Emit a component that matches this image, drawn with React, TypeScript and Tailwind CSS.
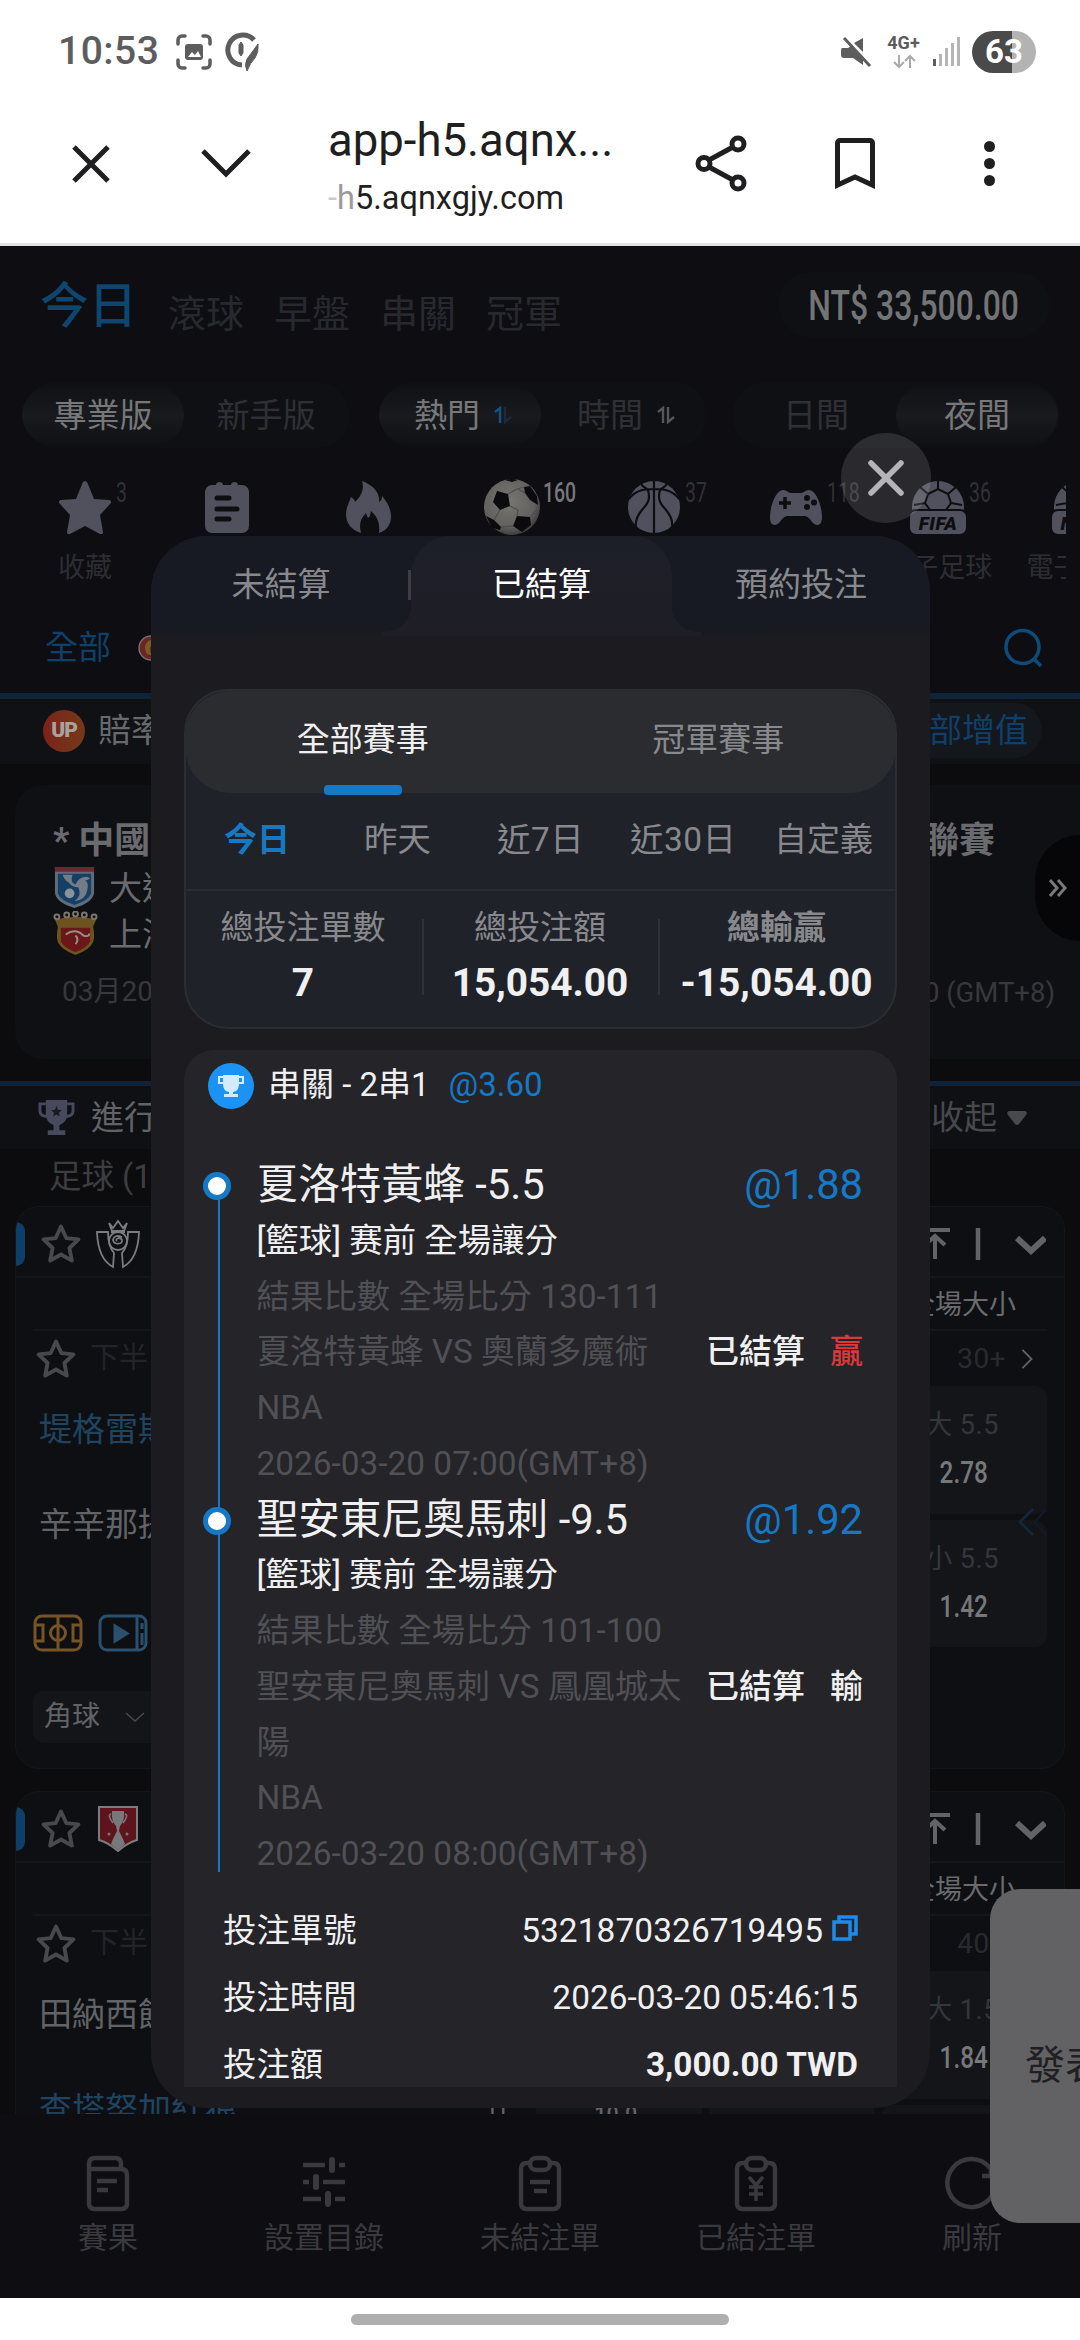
import React from "react";

type P = { className?: string };

const Star = ({ className = "" }: P) => (
  <svg viewBox="0 0 24 24" className={className} fill="none" stroke="currentColor" strokeWidth="2.200" strokeLinejoin="round">
    <path d="M12 2l3 6.600 7 .8-5.200 4.900 1.400 7.200L12 18l-6.200 3.500 1.400-7.200L2 9.400l7-.8z" />
  </svg>
);

const SolidStar = () => (
  <svg viewBox="0 0 54 54" className="size-[54px]" fill="#50515c">
    <path d="M27 1c1 0 2 1 2.500 2L36 19l15 1c2 .5 3 2 1 4L42 35l3 17c0 2-1 2.500-3 2l-15-8-15 8c-2 .5-3 0-3-2l3-17L2 24c-2-2-1-3.500 1-4l15-1 6.500-16c.5-1 1.500-2 2.500-2z" />
  </svg>
);

const ListIcon = () => (
  <svg viewBox="0 0 54 54" className="size-[54px]" fill="#50515c">
    <path d="M12 5h4c0-4 7-4 7 0h8c0-4 7-4 7 0h4a7 7 0 0 1 7 7v34a7 7 0 0 1-7 7H12a7 7 0 0 1-7-7V12a7 7 0 0 1 7-7z" />
    <path d="M17 18h12M17 29h20M17 39h12" stroke="#0d0d12" strokeWidth="5" strokeLinecap="round" />
  </svg>
);

const Fire = () => (
  <svg viewBox="0 0 54 54" className="size-[54px]" fill="#50515c">
    <path d="M20 1c13 5 18 13 17 21 2-1 3-3 3-6 6 7 9 13 9 21 0 8-5 14-12 16 1-9-1-16-8-22-1 4-1 6-3 7-1-2-2-4-2-5-6 6-7 12-5 20C10 50 4 44 4 34c0-6 3-11 5-17 2 1 4 3 4 5 5-5 10-12 7-21z" />
  </svg>
);

const Soccer = () => (
  <svg viewBox="0 0 58 58" className="size-[58px]">
    <defs>
      <radialGradient id="ball" cx=".45" cy=".4" r=".65">
        <stop offset="0" stopColor="#777672" />
        <stop offset=".7" stopColor="#62615f" />
        <stop offset="1" stopColor="#333" />
      </radialGradient>
    </defs>
    <circle cx="29" cy="29" r="28" fill="url(#ball)" />
    <g fill="#0b0b0e">
      <path d="M14 13l11 3 2 12-10 4-7-8z" />
      <path d="M41 9l6-1 7 10 1 9-8-5-5-7z" />
      <path d="M34 38l13 1 1 8-9 7-9-6z" />
      <path d="M3 38l8 4 7 7-1 3-8-2z" />
      <path d="M22 2q7-2 13 0l-6 2z" />
    </g>
    <path d="M25 16l9-5 7-2M27 28l8 4-1 6M42 15l-7-4M17 32l-6 10M30 48l-12 1M47 39l7-7" stroke="#4f4e4c" strokeWidth="1.300" fill="none" />
  </svg>
);

const Basketball = () => (
  <svg viewBox="0 0 54 54" className="size-[54px]">
    <circle cx="27" cy="27" r="26" fill="#50515c" />
    <path d="M27 1v52M14 4c2 3 5 4 7 6 3 10-1 14-6 20-6 7-7 12-6 18M40 4c-2 3-5 4-7 6-3 10 1 14 6 20 6 7 7 12 6 18M2 19C9 9 20 9 27 9s18 0 25 10" stroke="#0d0d12" strokeWidth="2.200" fill="none" />
  </svg>
);

const Gamepad = () => (
  <svg viewBox="0 0 54 54" className="size-[54px]" fill="#50515c">
    <path d="M14 10c4 0 5 3 8 3h10c3 0 4-3 8-3 7 0 13 16 13 27 0 6-2 8-5 8-5 0-7-9-12-9H18c-5 0-7 9-12 9-3 0-5-2-5-8C1 26 7 10 14 10z" />
    <path d="M16 17v12M10 23h12" stroke="#0d0d12" strokeWidth="3.500" />
    <g fill="#0d0d12"><circle cx="38" cy="18" r="3" /><circle cx="38" cy="27" r="3" /><circle cx="45" cy="22.500" r="3" /></g>
  </svg>
);

const Esport = ({ label }: { label: string }) => (
  <svg viewBox="0 0 58 58" className="size-[58px]">
    <circle cx="29" cy="29" r="26" fill="#50515c" />
    <path d="M19 16l10-5 10 5 3 9-5 7H21l-5-7zM29 3v8M39 16l8-7M19 16l-8-7M16 25l-11 2M42 25l11 2" stroke="#0d0d12" strokeWidth="2" fill="none" />
    <rect x="0" y="32" width="58" height="25" rx="7" fill="#50515c" stroke="#0d0d12" strokeWidth="2" />
    <text x="29" y="51.500" textAnchor="middle" fontFamily="Roboto" fontWeight="900" fontStyle="italic" fontSize="19" letterSpacing="0.500" fill="#0d0d12">{label}</text>
  </svg>
);

const Sorter = ({ a, b }: { a: string; b: string }) => (
  <svg viewBox="0 0 18 18" className="size-[18px]" fill="none" strokeWidth="2.400">
    <path d="M1 6l5-4v15" stroke={a} />
    <path d="M11 1v15l6-5" stroke={b} />
  </svg>
);

function StatusBar() {
  return (
    <div className="flex h-[103px] items-center justify-between pl-[58px] pr-[44px] text-[#5d5d5d]">
      <div className="flex items-center">
        <span className="w-[118px] text-[39px] font-medium leading-none tracking-[0.500px]">10:53</span>
        <svg viewBox="0 0 36 36" className="size-[36px]" fill="none" stroke="currentColor" strokeWidth="3.500" strokeLinecap="round">
          <path d="M2 10V6a4 4 0 0 1 4-4h3M27 2h3a4 4 0 0 1 4 4v4M34 26v4a4 4 0 0 1-4 4h-3M9 34H6a4 4 0 0 1-4-4v-4" />
          <rect x="9" y="10" width="18" height="16" rx="3" fill="currentColor" stroke="none" />
          <path d="M12 23l4-5 3 3 3-4 3 6z" fill="#fff" stroke="none" />
        </svg>
        <svg viewBox="0 0 36 40" className="ml-[12px] h-[40px] w-[36px]" fill="none" stroke="currentColor">
          <path d="M30 8A15 15 0 1 0 18 33" strokeWidth="5" />
          <path d="M34 12q1 8-3 14-5 5-8 13-3-6 0-12z" fill="currentColor" strokeWidth="1" />
          <path d="M17 10l2 3v8l-2 3-2-3v-8z" fill="currentColor" strokeWidth="1" />
        </svg>
      </div>
      <div className="flex items-center">
        <svg viewBox="0 0 32 30" className="h-[30px] w-[32px]">
          <path d="M2 11h6l3-2 12 14v5l-10-7H4q-3 0-3-3v-4q0-3 1-3zM14 6l9-5v14z" fill="currentColor" />
          <path d="M4 1l26 28" stroke="currentColor" strokeWidth="3" />
        </svg>
        <div className="ml-[15px] flex w-[34px] flex-col items-center">
          <span className="text-[18px] font-bold leading-[18px]">4G+</span>
          <svg viewBox="0 0 24 15" className="mt-[2px] h-[15px] w-[24px]" fill="none" stroke="#aaa" strokeWidth="2">
            <path d="M7 1v12M2 8l5 5 5-5M18 14V2M13 7l5-5 5 5" />
          </svg>
        </div>
        <div className="ml-[12px] flex h-[29px] items-end gap-[2.500px]">
          <i className="h-[7px] w-[3.500px] bg-[#5d5d5d]" />
          <i className="h-[12px] w-[3.500px] bg-[#b5b5b5]" />
          <i className="h-[18px] w-[3.500px] bg-[#b5b5b5]" />
          <i className="h-[23px] w-[3.500px] bg-[#b5b5b5]" />
          <i className="h-[29px] w-[3.500px] bg-[#b5b5b5]" />
        </div>
        <div className="ml-[12px] flex h-[42px] w-[64px] items-center justify-center rounded-full bg-linear-to-r from-[#4a4a4a] from-62% to-[#b3b3b3] to-62% text-[33px] font-bold leading-none text-white">63</div>
      </div>
    </div>
  );
}

function BrowserBar() {
  return (
    <div className="flex h-[143px] items-start border-b-[3px] border-[#dfe3e5] text-[#1f1f22]">
      <svg viewBox="0 0 38 38" className="ml-[72px] mt-[42px] size-[38px]" stroke="currentColor" strokeWidth="5"><path d="M2 2l34 34M36 2L2 36" /></svg>
      <svg viewBox="0 0 50 29" className="ml-[91px] mt-[46px] h-[29px] w-[50px]" fill="none" stroke="currentColor" strokeWidth="5"><path d="M2 2l23 23L48 2" /></svg>
      <div className="ml-[77px] mt-[11px] w-[300px]">
        <div className="whitespace-nowrap text-[45.500px] leading-[54px]">app-h5.aqnx...</div>
        <div className="mt-[11px] whitespace-nowrap text-[32.500px] leading-[38px]"><span className="text-[#c9c9c9]">-</span><span className="text-[#9a9a9a]">h</span>5.aqnxgjy.com</div>
      </div>
      <svg viewBox="0 0 52 57" className="ml-[67px] mt-[32px] h-[57px] w-[52px]" fill="none" stroke="currentColor" strokeWidth="5">
        <circle cx="43" cy="9" r="6" /><circle cx="9" cy="28.500" r="6" /><circle cx="43" cy="48" r="6" /><path d="M14 25l24-13M14 32l24 13" />
      </svg>
      <svg viewBox="0 0 40 51" className="ml-[88px] mt-[35px] h-[51px] w-[40px]" fill="none" stroke="currentColor" strokeWidth="5"><path d="M2.500 47V5a2.500 2.500 0 0 1 2.500-2.500h30A2.500 2.500 0 0 1 37.500 5v42L20 39z" /></svg>
      <div className="ml-[109px] mt-[38px] flex flex-col gap-[6px]">
        <i className="size-[11px] rounded-full bg-current" /><i className="size-[11px] rounded-full bg-current" /><i className="size-[11px] rounded-full bg-current" />
      </div>
    </div>
  );
}

function Toggle({ children, className = "" }: { children: React.ReactNode; className?: string }) {
  return <div className={"flex h-[66px] w-[328px] items-center rounded-full bg-[#0f1014] " + className}>{children}</div>;
}

const pillOn = "flex h-[58px] w-[162px] items-center justify-center gap-[14px] rounded-full bg-linear-to-b from-[#101115] via-[#191a1d] to-[#101115] text-[#77787a]";
const pillOff = "flex h-[58px] w-[164px] items-center justify-center gap-[14px] text-[#2f3035]";

function Sport({ icon, count, label, active }: { icon: React.ReactNode; count?: string; label?: string; active?: boolean }) {
  return (
    <div className="relative flex w-[142.200px] shrink-0 flex-col items-center">
      <div className="flex h-[58px] items-center">{icon}</div>
      {count && (
        <span className={"absolute left-[102px] top-[0px] origin-left scale-x-[.72] text-[27px] leading-[30px] " + (active ? "font-medium text-[#77787a]" : "text-[#303136]")}>{count}</span>
      )}
      <span className="mt-[16px] whitespace-nowrap text-[27px] leading-[32px] text-[#2d2e33]">{label}</span>
    </div>
  );
}

function Odds({ top, value, className }: { top: string; value: string; className: string }) {
  return (
    <div className={"flex w-[166px] flex-col items-center rounded-[12px] bg-[#141519] pt-[22px] " + className}>
      <span className="mr-[4px] text-[27px] leading-[34px] tracking-[0.500px] text-[#35363b]">{top}</span>
      <span className="mt-[13px] scale-x-[.76] text-[32px] font-medium leading-[34px] text-[#77787a]">{value}</span>
    </div>
  );
}

function LeagueHead({ crest }: { crest: React.ReactNode }) {
  return (
    <>
      <div className="flex h-[71px] items-center border-b-2 border-[#15161a] pt-[4px]">
        <i className="h-[44px] w-[9px] rounded-r-full bg-[#0d3f68]" />
        <Star className="ml-[15px] size-[42px] text-[#48494d]" />
        <div className="ml-[14px] flex w-[44px] justify-center">{crest}</div>
        <svg viewBox="0 0 130 34" className="ml-auto mr-[18px] h-[34px] w-[130px] text-[#626367]" fill="none" stroke="currentColor">
          <path d="M4 3h30M19 32V9M9 18l10-9 10 9" strokeWidth="4" />
          <path d="M62 1v32" strokeWidth="4.500" />
          <path d="M101 11l14 13 14-13" strokeWidth="6" />
        </svg>
      </div>
      <div className="mx-[17px] flex h-[53px] items-center justify-end border-b-2 border-[#15161a] pr-[31px] pt-[3px] text-[27px] text-[#6a6b6e]">全場大小</div>
    </>
  );
}

function MatchHead({ count }: { count: string }) {
  return (
    <div className="flex h-[55px] items-center pl-[19px]">
      <Star className="size-[42px] text-[#48494d]" />
      <span className="ml-[13px] text-[29px] text-[#232428]">下半</span>
      <span className="ml-auto text-[28px] tracking-[0.500px] text-[#292a2f]">{count}</span>
      <svg viewBox="0 0 12 22" className="ml-[15px] mr-[31px] h-[20px] w-[12px]" fill="none" stroke="#626367" strokeWidth="2"><path d="M1 1l10 10L1 21" /></svg>
    </div>
  );
}

function Page() {
  return (
    <div className="flex h-[1868px] flex-col overflow-hidden bg-[#0d0d12] pt-[26px]">
      <div className="flex h-[66px] shrink-0 items-center">
        <span className="ml-[40px] mt-[4px] w-[98px] text-[48.500px] font-medium leading-none text-[#0e4672]">今日</span>
        <div className="ml-[30px] mt-[18px] flex gap-[30px] text-[38px] leading-none text-[#28292e]">
          <span>滾球</span><span>早盤</span><span>串關</span><span>冠軍</span>
        </div>
        <div className="ml-auto mr-[30px] flex h-[66px] w-[272px] items-center justify-center rounded-full bg-[#0f1014]">
          <span className="scale-x-[.76] whitespace-nowrap text-[42px] font-medium text-[#737476]">NT$ 33,500.00</span>
        </div>
      </div>
      <div className="mt-[44px] flex shrink-0 items-center pl-[22px] text-[33px] leading-none">
        <Toggle><span className={pillOn}>專業版</span><span className={pillOff}>新手版</span></Toggle>
        <Toggle className="ml-[29px]"><span className={pillOn + " pl-[6px]"}>熱門<Sorter a="#0f5488" b="#1c2b38" /></span><span className={pillOff + " pl-[6px]"}>時間<Sorter a="#55565a" b="#55565a" /></span></Toggle>
        <Toggle className="ml-[25px]"><span className={pillOff + " pl-[4px]"}>日間</span><span className={pillOn}>夜間</span></Toggle>
      </div>
      <div className="mr-[14px] mt-[30px] flex h-[114px] shrink-0 overflow-hidden pl-[14px]">
        <Sport icon={<SolidStar />} count="3" label="收藏" />
        <Sport icon={<ListIcon />} />
        <Sport icon={<Fire />} />
        <Sport icon={<Soccer />} count="160" active />
        <Sport icon={<Basketball />} count="37" />
        <Sport icon={<Gamepad />} count="118" />
        <Sport icon={<Esport label="FIFA" />} count="36" label="電子足球" />
        <Sport icon={<Esport label="NBA" />} label="電子籃球" />
      </div>
      <div className="flex h-[101px] shrink-0 items-center pl-[45px] pr-[36px] pt-[10px]">
        <span className="text-[33px] text-[#0f4168]">全部</span>
        <svg viewBox="0 0 26 26" className="ml-[27px] size-[26px]"><circle cx="13" cy="13" r="12" fill="#6b2524" stroke="#74706a" strokeWidth="1.500" /><path d="M15 4C7 6 5 12 9 19l6 2c-5-5-4-10 2-15z" fill="#7a5c22" /></svg>
        <svg viewBox="0 0 40 40" className="ml-auto size-[40px]" fill="none" stroke="#0f4b7a" strokeWidth="3.500"><circle cx="18.500" cy="19" r="16.500" /><path d="M30 31l7 7" /></svg>
      </div>
      <div className="h-[6px] shrink-0 bg-[#0f2438]" />
      <div className="flex h-[65px] shrink-0 items-center bg-[#0f1115] pb-[2px] pl-[43px] pr-[38px]">
        <div className="flex size-[42px] items-center justify-center rounded-full bg-linear-to-r from-[#7c2118] to-[#73391a] text-[21px] font-black tracking-[-1px] text-[#a9a3a0]">UP</div>
        <span className="ml-[13px] text-[33px] text-[#68696c]">賠率增值</span>
        <span className="ml-auto rounded-full bg-[#14171c] px-[14px] text-[33px] leading-[55px] text-[#10406a]">全部增值</span>
      </div>
      <div className="flex h-[317px] shrink-0 flex-col bg-[#0c0c0e] pl-[15px] pt-[21px]">
        <div className="flex h-[274px] rounded-l-[28px] bg-[#0f1014] pl-[38px] text-[#6a6b6e]">
          <div className="flex w-[400px] flex-col pt-[31px]">
            <div className="text-[36px] font-bold leading-[50px]">* 中國</div>
            <div className="flex h-[45px] items-center">
              <svg viewBox="0 0 44 44" className="-mt-[3px] size-[43px]"><path d="M2 1h40v27q-2 10-20 15Q4 38 2 28z" fill="#606c78" /><path d="M5 8h34v20q-2 7-17 12Q7 35 5 28z" fill="#153f66" /><path d="M2 1h40v5H2z" fill="#6b2a31" /><path d="M10 9h10q-3 8 3 10 3-8 12-8l3 2-5 2q4 2 2 10-2 10-13 11 8-6 4-14-6 0-10-5-5-3-6-8z" fill="#727d88" /><circle cx="17" cy="28" r="5" fill="#8a929a" /></svg>
              <span className="ml-[13px] text-[33px]">大連</span>
            </div>
            <div className="mt-[1px] flex h-[45px] items-center">
              <svg viewBox="0 0 46 46" className="-mt-[3px] size-[45px]"><path d="M2 9q21-6 42 0l-3 7q2 10 0 16-4 8-18 13Q9 40 5 32q-2-6 0-16z" fill="#6d5320" /><path d="M8 17h30v14q-3 7-15 11Q11 38 8 31z" fill="#6b1718" /><path d="M13 24q10-7 18 1 6 2 6-2M23 25q4 4 0 9" stroke="#968d88" strokeWidth="2" fill="none" /><g fill="none" stroke="#7d766c" strokeWidth="2"><circle cx="4" cy="6" r="2.500" /><circle cx="14" cy="4" r="2.500" /><circle cx="23" cy="3" r="2.500" /><circle cx="32" cy="4" r="2.500" /><circle cx="42" cy="6" r="2.500" /></g></svg>
              <span className="ml-[11px] text-[33px]">上海</span>
            </div>
            <div className="ml-[9px] mt-[17px] text-[28px] leading-[36px] text-[#37383c]">03月20日</div>
          </div>
          <div className="relative ml-auto flex w-[250px] flex-col pt-[31px]">
            <div className="pr-[85px] text-right text-[36px] font-bold leading-[50px]">聯賽</div>
            <div className="mt-[109px] whitespace-nowrap pr-[25px] text-right text-[27.500px] leading-[36px] text-[#37383c]">00 (GMT+8)</div>
            <div className="absolute right-0 top-[50px] flex h-[106px] w-[45px] items-center justify-center rounded-l-full bg-[#060608]">
              <svg viewBox="0 0 18 18" className="size-[18px]" fill="none" stroke="#77787a" strokeWidth="3"><path d="M1 1l7 8-7 8M9 1l7 8-7 8" /></svg>
            </div>
          </div>
        </div>
      </div>
      <div className="h-[5px] shrink-0 bg-[#0f2438]" />
      <div className="flex h-[63px] shrink-0 items-center bg-[#0f1014] pl-[38px] pr-[53px] text-[33px] text-[#626367]">
        <svg viewBox="0 0 38 38" className="size-[37px]" fill="#474a5c"><path d="M8 1h22v14q0 9-8 12v5h6v5H10v-5h6v-5q-8-3-8-12z" /><path d="M8 5H2v7q0 5 7 6M30 5h6v7q0 5-7 6" stroke="#474a5c" strokeWidth="3" fill="none" /><path d="M19 7l1.500 4 4 .5-3 2.500 1 4-3.500-2-3.500 2 1-4-3-2.500 4-.5z" fill="#191a24" /></svg>
        <span className="ml-[16px]">進行中</span>
        <span className="ml-auto text-[#48494d]">收起</span>
        <svg viewBox="0 0 20 14" className="ml-[10px] h-[14px] w-[20px]" fill="#48494d"><path d="M2 0h16q3 1 1 4l-7 9q-2 2-4 0L1 4Q-1 1 2 0z" /></svg>
      </div>
      <div className="flex h-[57px] shrink-0 items-center bg-[#0c0c0e] pl-[49px] text-[32.500px] text-[#3c3d41]">足球 (16)</div>
      <div className="flex grow flex-col gap-[22px] bg-[#0c0c0e] px-[15px]">
        <div className="h-[563px] shrink-0 overflow-hidden rounded-[24px] border border-[#15161a] bg-[#0e0f13]">
          <LeagueHead crest={<svg viewBox="0 0 44 50" className="h-[50px] w-[44px]" fill="none" stroke="#7b7c7f" strokeWidth="1.800"><path d="M1 13h11q0 14 6 21l-1 14Q2 40 1 13zM43 13H32q0 14-6 21l1 14Q42 40 43 13zM13 4l4 5 5-7 5 7 4-5-3 8H16zM15 13h14" /><circle cx="22" cy="22" r="9" /><path d="M26 18q-8-3-9 3 1 5 8 3 3-4-2-5-4 1-2 3" /></svg>} />
          <MatchHead count="30+" />
          <div className="flex justify-between pr-[17px]">
            <div className="flex w-[400px] flex-col pl-[23px]">
              <span className="mt-[19px] text-[33px] leading-[50px] text-[#1f4460]">堤格雷斯</span>
              <span className="mt-[45px] text-[33px] leading-[50px] text-[#626367]">辛辛那提</span>
              <div className="ml-[-6px] mt-[64px] flex gap-[15px]">
                <svg viewBox="0 0 50 38" className="h-[38px] w-[50px]" fill="none" stroke="#765424" strokeWidth="3"><rect x="2" y="2" width="46" height="34" rx="7" /><path d="M25 2v34M2 11h8v16H2M48 11h-8v16h8" /><circle cx="25" cy="19" r="7.500" /></svg>
                <svg viewBox="0 0 50 38" className="h-[38px] w-[50px]" fill="none" stroke="#2a506f" strokeWidth="3"><rect x="2" y="2" width="46" height="34" rx="7" /><path d="M39 2v34M44 9v6M44 19v12" /><path d="M17 12v15l12-7.500z" fill="#2a506f" /></svg>
              </div>
              <div className="ml-[-6px] mt-[39px] flex h-[52px] w-[150px] items-center rounded-[10px] bg-[#141519] pl-[11px] text-[28px] text-[#626367]">角球<svg viewBox="0 0 20 10" className="ml-[25px] h-[10px] w-[20px]" fill="none" stroke="#48494d" strokeWidth="1.500"><path d="M1 1l9 8 9-8" /></svg></div>
            </div>
            <div className="relative flex flex-col gap-[6px]">
              <Odds top="大 5.5" value="2.78" className="h-[128px]" />
              <Odds top="小 5.5" value="1.42" className="h-[127px]" />
              <svg viewBox="0 0 30 28" className="absolute right-0 top-[122px] h-[28px] w-[30px]" fill="none" strokeWidth="2.500"><path d="M16 1L3 14l13 13" stroke="#16283e" /><path d="M29 1L18 14l11 13" stroke="#111a25" /></svg>
            </div>
          </div>
        </div>
        <div className="h-[563px] shrink-0 overflow-hidden rounded-[24px] border border-[#15161a] bg-[#0e0f13]">
          <LeagueHead crest={<svg viewBox="0 0 40 46" className="h-[46px] w-[40px]"><path d="M1 1h38v33q-10 3-19 11Q11 37 1 34z" fill="#5e141d" stroke="#7b7c7f" strokeWidth="2" /><path d="M14 5h12q1 10-4 15l-1 5 4 8 2 5-7 6-7-6 2-5 4-8-1-5q-5-5-4-15z" fill="#77787a" /><path d="M13 8q-4 1 2 9M27 8q4 1-2 9" stroke="#77787a" strokeWidth="1.500" fill="none" /><circle cx="11" cy="28" r="1.500" fill="#77787a" /><circle cx="29" cy="28" r="1.500" fill="#77787a" /></svg>} />
          <MatchHead count="40+" />
          <div className="flex justify-between pr-[17px]">
            <div className="flex w-[400px] flex-col pl-[23px]">
              <span className="mt-[19px] text-[33px] leading-[50px] text-[#626367]">田納西館</span>
              <span className="mt-[45px] text-[33px] leading-[50px] text-[#1f4460]">查塔努加紅狼</span>
            </div>
            <div className="flex">
              <span className="mr-[28px] mt-[128px] scale-x-[.8] text-[30px] leading-[34px] text-[#626367]">H</span>
              <div className="mt-[134px] flex h-[60px] w-[166px] justify-center bg-[#141519] text-[30px] leading-[22px] text-[#626367]"><span className="mr-[6px] scale-x-[.72] font-medium">10.0</span></div>
              <div className="ml-[7px] mt-[134px] h-[60px] w-[165px] bg-[#141519]" />
              <div className="ml-[7px] flex flex-col gap-[6px]">
                <Odds top="大 1.5" value="1.84" className="h-[128px]" />
                <Odds top="小 1.5" value="1.84" className="h-[127px]" />
              </div>
            </div>
          </div>
        </div>
      </div>
    </div>
  );
}

const navPaths = [
  <><path d="M4 14V9q0-6 6-6h20q6 0 6 6v5M4 14h32q6 0 6 6v28q0 6-6 6H10q-6 0-6-6z" /><path d="M12 26h20M12 35h11" /></>,
  <><path d="M2 10h22M38 10h6M2 27h6M22 27h22M2 44h18M34 44h10" /><path d="M31 5v10M15 22v10M27 39v10" strokeWidth="6" strokeLinecap="round" /></>,
  <><path d="M12 8h-2q-6 0-6 6v34q0 6 6 6h26q6 0 6-6V14q0-6-6-6h-2" /><rect x="13" y="3" width="20" height="12" rx="6" /><path d="M13 27h20M17 36h13" /></>,
  <><path d="M12 8h-2q-6 0-6 6v34q0 6 6 6h26q6 0 6-6V14q0-6-6-6h-2" /><rect x="13" y="3" width="20" height="12" rx="6" /><path d="M16 22l7 8 7-8M23 30v16M16 32h14M16 39h14" strokeWidth="3.500" /></>,
  <><path d="M45 36A24 24 0 1 1 41 13M42 12v9h-9" /></>,
];

function BottomNav() {
  return (
    <div className="grid h-[184px] grid-cols-5 bg-[#0d0d12] pt-[41px] text-[#3a3a3e]">
      {["賽果", "設置目錄", "未結注單", "已結注單", "刷新"].map((t, i) => (
        <div key={t} className="flex flex-col items-center">
          <svg viewBox="0 0 46 56" className="h-[56px] w-[46px] overflow-visible" fill="none" stroke="currentColor" strokeWidth="4.500">{navPaths[i]}</svg>
          <span className="mt-[7px] text-[30px] leading-[40px]">{t}</span>
        </div>
      ))}
    </div>
  );
}

type LegT = { name: string; odds: string; score: string; teams: string[]; result: React.ReactNode; date: string };

function Leg({ name, odds, score, teams, result, date }: LegT) {
  return (
    <div className="relative pl-[72.500px] pr-[34px] text-[33.400px] leading-[55.750px] text-[#505055]">
      <i className="absolute left-[19px] top-[15px] size-[28px] rounded-full border-[5px] border-[#1679c6] bg-white" />
      <div className="flex justify-between text-[41.700px] text-[#f0f0f1]"><span>{name}</span><span className="text-[#1679c6]">{odds}</span></div>
      <div className="text-[#f0f0f1]">[籃球] 赛前 全場讓分</div>
      <div>結果比數 全場比分 {score}</div>
      <div className="flex justify-between">
        <div className="whitespace-nowrap">{teams.map((t) => <div key={t}>{t}</div>)}</div>
        <div className="flex gap-[25px] text-[33px] font-medium text-[#f0f0f1]"><span>已結算</span>{result}</div>
      </div>
      <div>NBA</div>
      <div>{date}</div>
    </div>
  );
}

function Modal() {
  return (
    <div className="absolute left-[151px] top-[536px] flex h-[1572px] w-[779px] flex-col overflow-hidden rounded-[56px] bg-[#1c1b20] px-[33px]">
      <div className="mx-[-33px] flex h-[100px] shrink-0 bg-linear-to-b from-[#171a22] from-85% to-[#1a1a21] text-[33px] leading-[98px] text-[#88898c]">
        <div className="w-[260px] text-center"><span className="inline-block w-[258px]">未結算</span></div>
        <div className="relative w-[261px] rounded-t-[40px] bg-linear-to-b from-[#1d1f28] to-[#1f1e27] text-center text-white">
          <i className="absolute left-[-3px] top-[34px] h-[30px] w-[3px] bg-[#3d3e43]" />
          <svg viewBox="0 0 30 30" className="absolute -left-[29px] bottom-0 size-[30px]" fill="#1f1e27"><path d="M30 0v30H0v-4Q26 26 30 0z" /></svg>
          <svg viewBox="0 0 30 30" className="absolute -right-[29px] bottom-0 size-[30px]" fill="#1f1e27"><path d="M0 0v30h30v-4Q4 26 0 0z" /></svg>
          已結算
        </div>
        <div className="w-[258px] text-center">預約投注</div>
      </div>
      <div className="mt-[53px] flex h-[340px] shrink-0 flex-col rounded-[44px] border-2 border-[#2c2d31] bg-[#20222a] text-[33px]">
        <div className="relative -mx-[1px] flex h-[102px] shrink-0 rounded-[46px] bg-[#2b2c30] leading-[98px] text-[#88898c]">
          <span className="w-1/2 text-center text-[#f0f0f1]">全部賽事</span><span className="w-1/2 text-center">冠軍賽事</span>
          <i className="absolute left-[139px] top-[94px] h-[10px] w-[78px] rounded-[4px] bg-[#1679c6]" />
        </div>
        <div className="flex h-[98px] shrink-0 items-center border-b-2 border-[#2b2c31] pb-[2px] pl-[38px] text-[33.400px] text-[#88898c]">
          <span className="w-[140px] text-[33px] font-bold text-[#1679c6]">今日</span><span className="w-[133px]">昨天</span><span className="w-[133px] tracking-[0.500px]">近7日</span><span className="w-[144px] tracking-[0.500px]">近30日</span><span className="text-[33px]">自定義</span>
        </div>
        <div className="grid grow grid-cols-[238px_236px_1fr] items-center divide-x-2 divide-[#303136] pb-[38px] pt-[28px] text-center">
          {[["總投注單數", "7"], ["總投注額", "15,054.00"], ["總輸贏", "-15,054.00"]].map(([a, b], i) => (
            <div key={a} className="flex h-[76px] flex-col items-center justify-center pr-[2px]">
              <span className={"leading-[48px] text-[#88898c] " + (i === 2 ? "font-bold" : "")}>{a}</span>
              <span className="mt-[4px] text-[38.800px] font-bold leading-[54px] text-[#f0f0f1]">{b}</span>
            </div>
          ))}
        </div>
      </div>
      <div className="mt-[21px] flex h-[1037px] shrink-0 flex-col overflow-hidden rounded-t-[30px] bg-[#242429]">
        <div className="flex h-[72px] shrink-0 items-center pl-[24px] text-[33px] text-[#f0f0f1]">
          <div className="flex size-[46px] items-center justify-center rounded-full bg-[#1a93f5]">
            <svg viewBox="0 0 28 22" className="h-[22px] w-[28px]" fill="#d4ebff"><path d="M6 0h16v9q0 7-6 8v2h5v3H7v-3h5v-2q-6-1-6-8z" /><path d="M6 2H2v6h4M22 2h4v6h-4" stroke="#d4ebff" strokeWidth="2" fill="none" /></svg>
          </div>
          <span className="-mt-[2px] ml-[14px]">串關 - 2串1</span><span className="-mt-[2px] ml-[19px] text-[#1679c6]">@3.60</span>
        </div>
        <div className="relative mt-[35px] shrink-0">
          <i className="absolute left-[34px] top-[30px] h-[685px] w-[2px] bg-[#1679c6]" />
          <Leg name="夏洛特黃蜂 -5.5" odds="@1.88" score="130-111" teams={["夏洛特黃蜂 VS 奧蘭多魔術"]} result={<span className="text-[#d93a3c]">贏</span>} date="2026-03-20 07:00(GMT+8)" />
          <Leg name="聖安東尼奧馬刺 -9.5" odds="@1.92" score="101-100" teams={["聖安東尼奧馬刺 VS 鳳凰城太", "陽"]} result={<span>輸</span>} date="2026-03-20 08:00(GMT+8)" />
        </div>
        <div className="mt-[15px] shrink-0 px-[39px] text-[33.400px] leading-[67px] text-[#f0f0f1]">
          <div className="flex items-center justify-between"><span>投注單號</span><span className="flex items-center tracking-[0.100px]">5321870326719495
            <svg viewBox="0 0 26 26" className="-mt-[4px] ml-[9px] size-[26px]" fill="none" stroke="#1d8bea" strokeWidth="3.500"><path d="M2 7h16v17H2z" /><path d="M7 6V2h17v17h-5" /></svg></span></div>
          <div className="flex justify-between"><span>投注時間</span><span>2026-03-20 05:46:15</span></div>
          <div className="flex justify-between"><span>投注額</span><span className="font-bold">3,000.00 TWD</span></div>
        </div>
      </div>
    </div>
  );
}

export default function App() {
  return (
    <div className="relative h-[2340px] w-[1080px] overflow-hidden bg-white font-[Roboto,'Noto_Sans_CJK_TC',sans-serif]">
      <StatusBar />
      <BrowserBar />
      <Page />
      <BottomNav />
      <div className="flex h-[42px] justify-center pt-[16px]"><i className="h-[11px] w-[378px] rounded-full bg-[#afafaf]" /></div>
      <div className="absolute left-[841px] top-[433px] flex size-[90px] items-center justify-center rounded-full bg-white/12">
        <svg viewBox="0 0 36 36" className="size-[36px]" stroke="#b4b4b6" strokeWidth="5.500" strokeLinecap="round"><path d="M3 3l30 30M33 3L3 33" /></svg>
      </div>
      <Modal />
      <div className="absolute left-[990px] top-[1889px] flex h-[334px] w-[120px] items-center rounded-[30px] bg-[#626264] pl-[35px] pt-[20px] text-[40px] text-[#202022]">
        <span className="whitespace-nowrap">發表</span>
      </div>
    </div>
  );
}
